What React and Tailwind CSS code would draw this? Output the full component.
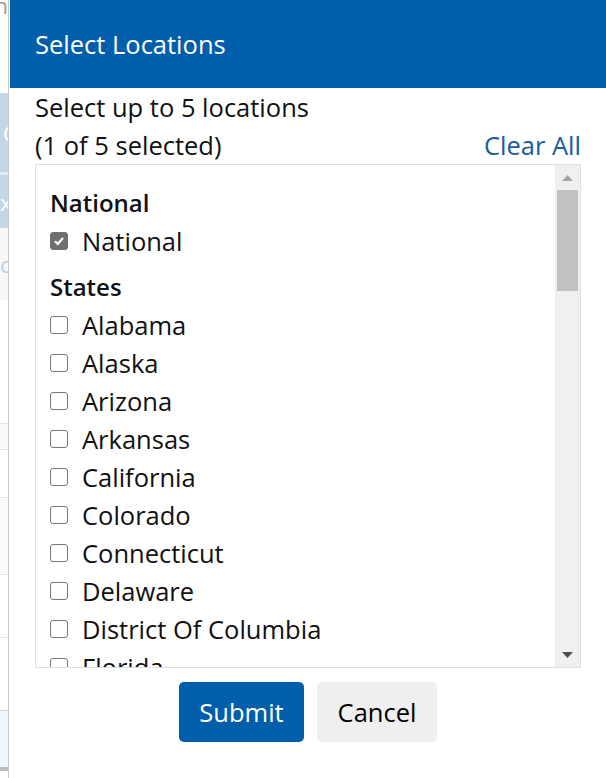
import { useState } from "react";

const STATES = [
  "Alabama",
  "Alaska",
  "Arizona",
  "Arkansas",
  "California",
  "Colorado",
  "Connecticut",
  "Delaware",
  "District Of Columbia",
  "Florida",
  "Georgia",
];

const FONT = { fontFamily: '"Open Sans", "Liberation Sans", sans-serif' };

export default function App() {
  const [selected, setSelected] = useState(["National"]);

  const toggle = (name) => {
    setSelected((cur) =>
      cur.includes(name) ? cur.filter((n) => n !== name) : [...cur, name]
    );
  };

  return (
    <div className="flex h-[778px] w-[606px] overflow-hidden bg-white" style={FONT}>
      <BackdropStrip />
      <div className="w-px bg-[#c8c8c8]" />
      <div className="w-px bg-white" />

      {/* ================= MODAL ================= */}
      <div className="flex min-w-0 flex-1 flex-col">
        <div className="flex h-[88px] shrink-0 items-center bg-[#005eaa] px-[25px]">
          <h1 className="text-[25.5px] text-white">Select Locations</h1>
        </div>

        <div className="flex flex-col px-[25px] text-[25.5px] text-[#111]">
          <p className="h-[38px] leading-[38px]">Select up to 5 locations</p>
          <div className="flex h-[38px] items-center justify-between">
            <span>({selected.length} of 5 selected)</span>
            <button className="text-[#1b5c9a]" onClick={() => setSelected([])}>
              Clear All
            </button>
          </div>

          <div className="flex h-[504px] border border-[#dcdfe4]">
            <div className="flex-1 overflow-hidden pl-[14px] pt-[19px]">
              <GroupHeading>National</GroupHeading>
              <CheckRow
                label="National"
                checked={selected.includes("National")}
                onChange={() => toggle("National")}
              />
              <div className="mt-[8px]">
                <GroupHeading>States</GroupHeading>
              </div>
              {STATES.map((s) => (
                <CheckRow
                  key={s}
                  label={s}
                  checked={selected.includes(s)}
                  onChange={() => toggle(s)}
                />
              ))}
            </div>
            <Scrollbar />
          </div>

          <div className="mt-[14px] flex justify-center gap-[13px]">
            <button className="h-[60px] w-[125px] rounded-[5px] bg-[#005eaa] text-white">
              Submit
            </button>
            <button className="h-[60px] w-[120px] rounded-[5px] bg-[#efefef] text-black">
              Cancel
            </button>
          </div>
        </div>
      </div>
    </div>
  );
}

function GroupHeading({ children }) {
  return <h2 className="h-[38px] text-[24px] font-semibold leading-[38px] text-[#111]">{children}</h2>;
}

function CheckRow({ label, checked, onChange }) {
  return (
    <label className="flex h-[38px] cursor-pointer items-center leading-[38px]" onClick={onChange}>
      <span
        className={`flex h-[18px] w-[18px] shrink-0 items-center justify-center rounded-[3px] border ${
          checked ? "border-[#6f6f6f] bg-[#6f6f6f]" : "border-[#767676] bg-white"
        }`}
      >
        {checked && (
          <svg width="12" height="12" viewBox="0 0 12 12">
            <path d="M2 6.3 L4.8 9 L10 3" fill="none" stroke="white" strokeWidth="2.2" />
          </svg>
        )}
      </span>
      <span className="ml-[14px] whitespace-nowrap">{label}</span>
    </label>
  );
}

function Scrollbar() {
  return (
    <div className="flex w-[25px] shrink-0 flex-col items-center bg-[#f0f0f0]">
      <div className="flex h-[25px] items-center justify-center">
        <svg width="11" height="6" viewBox="0 0 11 6">
          <path d="M0 6 L5.5 0 L11 6 Z" fill="#a3a3a3" />
        </svg>
      </div>
      <div className="h-[101px] w-[21px] bg-[#c1c1c1]" />
      <div className="flex-1" />
      <div className="flex h-[25px] items-center justify-center">
        <svg width="11" height="6" viewBox="0 0 11 6">
          <path d="M0 0 L5.5 6 L11 0 Z" fill="#505050" />
        </svg>
      </div>
    </div>
  );
}

function BackdropStrip() {
  return (
    <div className="flex w-[8px] shrink-0 flex-col overflow-hidden text-[22px] leading-none">
      <div className="h-[93px] overflow-hidden">
        <div className="-mt-[6px] flex justify-end whitespace-nowrap text-[#9a9a9a]">Plan</div>
      </div>
      <div className="flex h-[79px] items-center bg-[#c3d7eb] pl-[3px] text-white">C</div>
      <div className="h-[3px] bg-[#e4ecf4]" />
      <div className="flex h-[53px] items-center bg-[#c3d7eb] text-white">x</div>
      <div className="flex h-[72px] items-center bg-[#f8f8f8] text-[#bcd0e3]">c</div>
      <div className="h-[123px] bg-white" />
      <div className="h-[27px] border-y border-[#e6e6e6] bg-[#fafafa]" />
      <div className="h-[47px] bg-white" />
      <div className="h-[78px] border-y border-[#e6e6e6] bg-[#fbfbfb]" />
      <div className="h-[62px] bg-white" />
      <div className="h-[73px] border-t border-[#e6e6e6] bg-white" />
      <div className="h-[57px] border-t border-[#d0d8e0] bg-[#eef6ff]" />
      <div className="h-[4px] bg-[#bdbdbd]" />
      <div className="flex-1 bg-white" />
    </div>
  );
}
